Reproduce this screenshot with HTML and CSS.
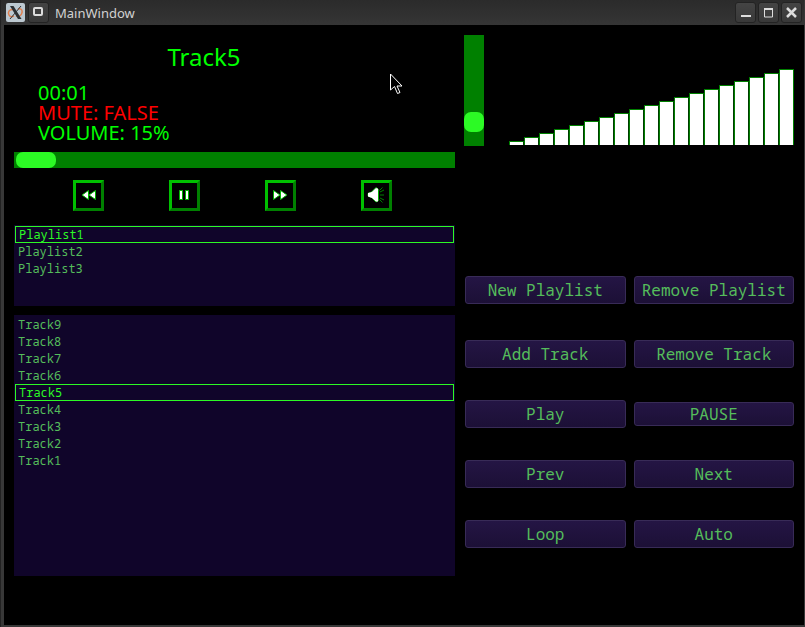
FILE: index.html
```html
<!DOCTYPE html>
<html lang="en">
<head>
<meta charset="utf-8">
<title>MainWindow</title>
<link rel="stylesheet" href="styles.css">
</head>
<body>
<div class="window">
  <header class="titlebar">
    <svg class="app-icon" width="19" height="19" viewBox="0 0 19 19" aria-hidden="true">
      <rect width="19" height="19" rx="2" fill="#bcc8d0"/>
      <path d="M7 6.500C3 6.500 1.500 9 3 12c1 2 3 2 5 1M12 6c4-1 5 2 3.500 5-1 2-3.500 3-5.500 2" fill="none" stroke="#e08050" stroke-width="1.500"/>
      <path d="M4 3h3.500l8 13H12z" fill="#2c3033"/>
      <path d="M15 3 4 16" stroke="#2c3033" stroke-width="1"/>
    </svg>
    <button class="win-btn" aria-label="Window menu"><svg width="19" height="19" viewBox="0 0 19 19"><rect x="5" y="5" width="8" height="7" rx="1" fill="none" stroke="#ddd" stroke-width="2" stroke-dasharray="0"/></svg></button>
    <h1 class="caption">MainWindow</h1>
    <div class="win-controls">
      <button class="win-btn" aria-label="Minimize"><svg width="19" height="19" viewBox="0 0 19 19"><path d="M5 13h10" stroke="#ddd" stroke-width="2"/></svg></button>
      <button class="win-btn" aria-label="Maximize"><svg width="19" height="19" viewBox="0 0 19 19"><path d="M5.500 6h8v8h-8z" fill="none" stroke="#ddd" stroke-width="1"/><path d="M5 6h9" stroke="#ddd" stroke-width="2"/></svg></button>
      <button class="win-btn" aria-label="Close"><svg width="19" height="19" viewBox="0 0 19 19"><path d="m5 5 9 9m0-9-9 9" stroke="#ddd" stroke-width="2.500"/></svg></button>
    </div>
  </header>
  <main class="player">
    <section class="left">
      <div class="display">
        <h2 class="track-title">Track5</h2>
        <p class="status">00:01</p>
        <p class="status status-mute">MUTE: FALSE</p>
        <p class="status">VOLUME: 15%</p>
      </div>
      <input class="seek" type="range" min="0" max="200" value="1" aria-label="Position">
      <div class="transport">
        <button class="key" aria-label="Rewind"><svg width="25" height="25" viewBox="0 0 25 25"><path d="M12.500 7.500v9L6 12zM19.500 7.500v9L13 12z" fill="#fff" stroke="#00b400"/><path d="M12 8.500v7L7.500 12zM18 9.500v5L14.500 12z" fill="#fff"/></svg></button>
        <button class="key" aria-label="Pause"><svg width="25" height="25" viewBox="0 0 25 25"><path d="M7.500 7.500h3v9h-3zM13.500 7.500h3v9h-3z" fill="#fff" stroke="#00b400"/></svg></button>
        <button class="key" aria-label="Forward"><svg width="25" height="25" viewBox="0 0 25 25"><path d="M5.500 7.500v9L12 12zM12.500 7.500v9L19 12z" fill="#fff" stroke="#00b400"/><path d="M6 8.500v7l4.500-3.500zM13 8.500v7l4.500-3.500z" fill="#fff"/></svg></button>
        <button class="key" aria-label="Mute"><svg width="25" height="25" viewBox="0 0 25 25"><path d="M4 10.500 7.500 9 12 4.500l2.500 2v11l-2.500 1.500-4.500-4.500L4 13z" fill="#fff" stroke="#00b400"/><path d="M4 10v3.500l4 1.500 4 3.500h2v-13h-2L8 9z" fill="#fff"/><path d="M15.500 7.500l3-3M16 9l4-2M16 12h4M16 15l4 2M15.500 16.500l3 3" stroke="#008000"/></svg></button>
      </div>
      <ul class="list playlists" role="listbox" aria-label="Playlists">
        <li class="row selected" role="option" aria-selected="true">Playlist1</li>
        <li class="row" role="option">Playlist2</li>
        <li class="row" role="option">Playlist3</li>
      </ul>
      <ul class="list tracks" role="listbox" aria-label="Tracks">
        <li class="row" role="option">Track9</li>
        <li class="row" role="option">Track8</li>
        <li class="row" role="option">Track7</li>
        <li class="row" role="option">Track6</li>
        <li class="row selected" role="option" aria-selected="true">Track5</li>
        <li class="row" role="option">Track4</li>
        <li class="row" role="option">Track3</li>
        <li class="row" role="option">Track2</li>
        <li class="row" role="option">Track1</li>
      </ul>
    </section>
    <section class="right">
      <div class="meter">
        <input class="volume" type="range" min="0" max="100" value="15" aria-label="Volume">
        <div class="bars">
          <i class="bar" style="height:4px"></i><i class="bar" style="height:8px"></i><i class="bar" style="height:12px"></i><i class="bar" style="height:16px"></i><i class="bar" style="height:20px"></i><i class="bar" style="height:24px"></i><i class="bar" style="height:28px"></i><i class="bar" style="height:32px"></i><i class="bar" style="height:36px"></i><i class="bar" style="height:40px"></i><i class="bar" style="height:44px"></i><i class="bar" style="height:48px"></i><i class="bar" style="height:52px"></i><i class="bar" style="height:56px"></i><i class="bar" style="height:60px"></i><i class="bar" style="height:64px"></i><i class="bar" style="height:68px"></i><i class="bar" style="height:72px"></i><i class="bar" style="height:76px"></i>
        </div>
      </div>
      <div class="actions">
        <button class="action">New Playlist</button><button class="action">Remove Playlist</button>
        <button class="action">Add Track</button><button class="action">Remove Track</button>
        <button class="action">Play</button><button class="action compact">PAUSE</button>
        <button class="action">Prev</button><button class="action">Next</button>
        <button class="action">Loop</button><button class="action">Auto</button>
      </div>
    </section>
  </main>
  <svg class="pointer" width="14" height="22" viewBox="0 0 14 22" aria-hidden="true"><path d="M1.500 1v16l4-3.500 3 7 2.500-1-3-6.500h5z" fill="#000" stroke="#fff" stroke-width="1"/></svg>
</div>
</body>
</html>
```

FILE: styles.css
```css
* { box-sizing: border-box; }
body {
  margin: 0;
  border-left: 1px solid #222;
  background: #000;
  font-family: "Noto Sans", sans-serif;
}
button { padding: 0; font: inherit; }
svg { display: block; }

.window {
  position: relative;
  display: flex;
  flex-direction: column;
  min-height: 100vh;
  border: solid #383838;
  border-width: 0 1px 2px 3px;
}
.titlebar {
  display: flex;
  align-items: center;
  gap: 3px;
  height: 25px;
  margin-left: -3px;
  padding: 0 2px 1px 5px;
  background: linear-gradient(#2b2b2b, #353535);
}
.win-btn {
  width: 21px;
  height: 21px;
  border: 1px solid #232323;
  border-radius: 3px;
  background: linear-gradient(#444, #393939);
}
.caption {
  flex: 1;
  margin: 0 0 0 3px;
  padding-top: 1px;
  font-size: 13px;
  font-weight: 400;
  line-height: 20px;
  color: #d2d2d2;
}
.win-controls { display: flex; gap: 2px; }

.player {
  display: grid;
  grid-template-columns: 441fr 331fr;
  gap: 9px;
  padding: 10px 9px 0 10px;
}
.left { display: flex; flex-direction: column; }
.display { height: 117px; color: #0f0; }
.track-title {
  margin: 0 61px 12px 0;
  padding-top: 8px;
  font-size: 24px;
  font-weight: 400;
  line-height: 28px;
  text-align: center;
}
.status {
  margin: 0 0 0 24px;
  font-size: 20px;
  line-height: 20px;
}
.status-mute { color: #f00; }

.seek, .volume {
  appearance: none;
  margin: 0;
  background: #008000;
}
.seek { width: 100%; height: 16px; }
.seek::-webkit-slider-thumb {
  appearance: none;
  width: 40px;
  height: 16px;
  border-radius: 7px;
  background: #2cfa25;
}
.volume {
  writing-mode: vertical-lr;
  direction: rtl;
  width: 20px;
  height: 111px;
}
.volume::-webkit-slider-thumb {
  appearance: none;
  width: 20px;
  height: 20px;
  border-radius: 7px;
  background: #2cfa25;
}

.transport {
  display: flex;
  gap: 65px;
  padding: 12px 0 14px 59px;
}
.key {
  width: 31px;
  height: 31px;
  border: 3px solid;
  border-color: #00c000 #008000 #008000 #00c000;
  background: #000;
}

.list {
  margin: 0;
  padding: 1px;
  list-style: none;
  background: #10052a;
  color: #55bd5b;
  font: 12px/17px "Noto Sans Mono", "DejaVu Sans Mono", monospace;
}
.playlists { height: 81px; margin-bottom: 9px; }
.tracks { height: 261px; }
.row { height: 17px; padding-left: 3px; }
.selected {
  border: 1px solid #2cfa25;
  line-height: 15px;
  color: #2cfa25;
}

.meter { display: flex; justify-content: space-between; height: 111px; }
.bars { display: flex; align-items: flex-end; padding: 0 1px 1px 0; }
.bar {
  width: 15px;
  border: solid #008000;
  border-width: 1px 1px 0;
  border-right-color: #003c00;
  background: #fff;
}
.bar:last-child { border-right-color: #008000; }

.actions {
  display: grid;
  grid-template-columns: 1fr 1fr;
  grid-template-rows: 32px repeat(4, 28px);
  gap: 32px 8px;
  margin-top: 130px;
  padding: 0 1px;
}
.action {
  align-self: center;
  height: 28px;
  border: 1px solid #382b57;
  border-radius: 3px;
  background: linear-gradient(#241544, #1c1036);
  color: #55bd5b;
  font: 16px/20px "Noto Sans Mono", "DejaVu Sans Mono", monospace;
}
.action:nth-child(-n+2) { align-self: start; }
.compact { height: 24px; }

.pointer { position: absolute; left: 385px; top: 73px; }
```
